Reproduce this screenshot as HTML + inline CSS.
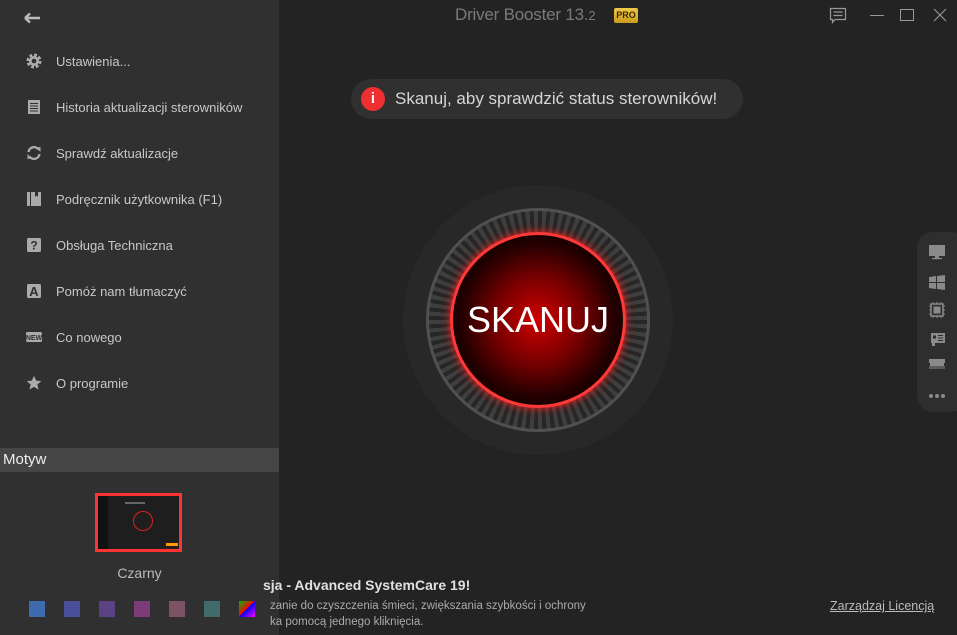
<!DOCTYPE html>
<html><head><meta charset="utf-8"><style>
*{margin:0;padding:0;box-sizing:border-box}
body{width:957px;height:635px;overflow:hidden;background:#232323;font-family:"Segoe UI","Liberation Sans",sans-serif;position:relative;color:#ccc}
.side{position:absolute;left:0;top:0;width:279px;height:635px;background:#303030;z-index:5}
.item{position:absolute;left:26px;height:20px;display:flex;align-items:center;font-size:13px;color:#c8c8c8}
.item svg{width:16px;height:16px;margin-right:14px;flex:none}
.motyw{position:absolute;left:0;top:448px;width:279px;height:24px;background:#454545;color:#eee;font-size:15px;line-height:24px;padding-left:3px}
.sw{position:absolute;top:601px;width:16px;height:16px}
.abs{position:absolute}
</style></head><body>
<div class="side">
 <svg class="abs" style="left:24px;top:11px" width="18" height="14" viewBox="0 0 18 14"><path d="M1 7H16M1 7L6 2.5M1 7L6 11.5" stroke="#bbb" stroke-width="2.4" fill="none"/></svg>
 <div class="item" style="top:51px"><svg viewBox="0 0 16 16"><circle cx="8" cy="8" r="5.5" fill="none" stroke="#aaa" stroke-width="4" stroke-dasharray="2.6 1.7"/><circle cx="8" cy="8" r="5" fill="#aaa"/><circle cx="8" cy="8" r="2.3" fill="#303030"/></svg>Ustawienia...</div>
 <div class="item" style="top:97px"><svg viewBox="0 0 16 16"><rect x="2" y="1" width="12" height="14" fill="#aaa"/><path d="M4 4.5H12M4 7H12M4 9.5H12M4 12H12" stroke="#303030" stroke-width="1"/></svg>Historia aktualizacji sterowników</div>
 <div class="item" style="top:143px"><svg viewBox="0 0 16 16"><path d="M2.5 7A5.5 5.5 0 0 1 12.5 4.5M13.5 9A5.5 5.5 0 0 1 3.5 11.5" stroke="#aaa" stroke-width="2.4" fill="none"/><path d="M10 2.5L14.5 2V7Z M6 13.5L1.5 14V9Z" fill="#aaa"/></svg>Sprawdź aktualizacje</div>
 <div class="item" style="top:189px"><svg viewBox="0 0 16 16"><rect x="1" y="1" width="3" height="14" fill="#aaa"/><path d="M5 1H9V6L10.5 4.5L12 6V1H15V15H5Z" fill="#aaa"/></svg>Podręcznik użytkownika (F1)</div>
 <div class="item" style="top:235px"><svg viewBox="0 0 16 16"><rect x="1" y="1" width="14" height="14" rx="1.5" fill="#aaa"/><text x="8" y="12.5" font-size="12" font-weight="bold" text-anchor="middle" fill="#303030" font-family="Liberation Sans">?</text></svg>Obsługa Techniczna</div>
 <div class="item" style="top:281px"><svg viewBox="0 0 16 16"><rect x="1" y="1" width="14" height="14" rx="1.5" fill="#aaa"/><text x="8" y="13" font-size="13" font-weight="bold" text-anchor="middle" fill="#303030" font-family="Liberation Sans">A</text></svg>Pomóż nam tłumaczyć</div>
 <div class="item" style="top:327px"><svg viewBox="0 0 16 16"><rect x="0" y="3" width="16" height="10" rx="1.5" fill="#aaa"/><text x="8" y="11.2" font-size="7" font-weight="bold" text-anchor="middle" fill="#303030" font-family="Liberation Sans">NEW</text></svg>Co nowego</div>
 <div class="item" style="top:373px"><svg viewBox="0 0 16 16"><path d="M8 0.8L10.2 5.6L15.3 6.1L11.4 9.5L12.6 14.6L8 11.9L3.4 14.6L4.6 9.5L0.7 6.1L5.8 5.6Z" fill="#aaa"/></svg>O programie</div>
 <div class="motyw">Motyw</div>
 <div class="abs" style="left:95px;top:493px;width:87px;height:59px;border:3px solid #ff3333;background:#1e1e1e">
  <div class="abs" style="left:0;top:0;width:10px;height:53px;background:#111"></div>
  <div class="abs" style="left:35px;top:15px;width:20px;height:20px;border:1.5px solid #d22;border-radius:50%"></div>
  <div class="abs" style="left:27px;top:6px;width:20px;height:2px;background:#666"></div>
  <div class="abs" style="left:68px;top:47px;width:12px;height:3px;background:#f90"></div>
 </div>
 <div class="abs" style="left:0;top:565px;width:279px;text-align:center;font-size:14px;color:#bbb">Czarny</div>
 <div class="sw" style="left:29px;background:#3f6aaf"></div>
 <div class="sw" style="left:64px;background:#4b4f9a"></div>
 <div class="sw" style="left:99px;background:#5b4283"></div>
 <div class="sw" style="left:134px;background:#7b3c78"></div>
 <div class="sw" style="left:169px;background:#7c5265"></div>
 <div class="sw" style="left:204px;background:#416a6b"></div>
 <div class="sw" style="left:239px;background:linear-gradient(135deg,#0b0 0%,#f00 50%,#00f 50%,#f0f 100%)"></div>
</div>

<div class="abs" style="left:455px;top:5px;font-size:17px;color:#7a7a7a;letter-spacing:-0.2px">Driver Booster 13.<span style="font-size:13px">2</span></div>
<div class="abs" style="left:614px;top:8px;width:24px;height:15px;background:linear-gradient(#f0c74a,#c99a1c);border-radius:2px;font-size:9px;color:#3a2a00;text-align:center;line-height:15px;font-weight:bold">PRO</div>
<svg class="abs" style="left:829px;top:7px" width="18" height="18" viewBox="0 0 18 18"><path d="M1.5 1.5H16.5V12.5H6L3.5 15.5V12.5H1.5Z" fill="none" stroke="#999" stroke-width="1.2"/><path d="M4.5 5H13.5M4.5 8.5H13.5" stroke="#999" stroke-width="1.2"/></svg>
<div class="abs" style="left:870px;top:15px;width:14px;height:1.3px;background:#999"></div>
<div class="abs" style="left:900px;top:9px;width:14px;height:12px;border:1.3px solid #999"></div>
<svg class="abs" style="left:933px;top:8px" width="14" height="14"><path d="M1 1L13 13M13 1L1 13" stroke="#999" stroke-width="1.1"/></svg>

<div class="abs" style="left:351px;top:79px;width:392px;height:40px;border-radius:20px;background:#303030"></div>
<div class="abs" style="left:361px;top:87px;width:24px;height:24px;border-radius:50%;background:#f03030;color:#fff;font-size:15px;font-weight:bold;text-align:center;line-height:24px">i</div>
<div class="abs" style="left:395px;top:89px;font-size:17px;color:#d6d6d6">Skanuj, aby sprawdzić status sterowników!</div>

<div class="abs" style="left:403px;top:185px;width:270px;height:270px;border-radius:50%;background:#282828"></div>
<div class="abs" style="left:426px;top:208px;width:224px;height:224px;border-radius:50%;background:#505050"></div>
<div class="abs" style="left:429px;top:211px;width:218px;height:218px;border-radius:50%;background:repeating-conic-gradient(#262626 0 2.2deg,#3e3e3e 2.2deg 4.5deg)"></div>
<div class="abs" style="left:429px;top:211px;width:218px;height:218px;border-radius:50%;background:radial-gradient(circle,rgba(255,40,40,0.5) 38%,rgba(120,10,10,0.25) 50%,transparent 66%)"></div>
<div class="abs" style="left:450px;top:232px;width:176px;height:176px;border-radius:50%;border:3px solid #ff3838;box-shadow:0 0 8px #ff2020;background:radial-gradient(circle,#d00000 0%,#7a0000 35%,#200000 65%,#150000 80%,#600000 100%)"></div>
<div class="abs" style="left:450px;top:299px;width:176px;text-align:center;font-size:36px;color:#fff;font-family:'Liberation Sans',sans-serif">SKANUJ</div>

<div class="abs" style="left:917px;top:232px;width:50px;height:180px;border-radius:16px;background:#2e2e2e"></div>
<svg class="abs" style="left:928px;top:244px" width="18" height="158" viewBox="0 0 18 158" fill="#8a8a8a">
 <rect x="1" y="1" width="16" height="11"/><rect x="7" y="12" width="4" height="2"/><rect x="4" y="14" width="10" height="1.2"/>
 <path d="M1 33L8 32V38H1Z M9 32L17 31V38H9Z M1 39H8V45L1 44Z M9 39H17V46L9 45Z"/>
 <rect x="3" y="60" width="12" height="12" fill="none" stroke="#8a8a8a" stroke-width="1.5"/><rect x="5.5" y="62.5" width="7" height="7"/>
 <path d="M5 58v2M9 58v2M13 58v2M5 72v2M9 72v2M13 72v2M1 62h2M1 66h2M1 70h2M15 62h2M15 66h2M15 70h2" stroke="#8a8a8a" stroke-width="1"/>
 <path d="M1 86H3V89H17V99H7V102H4V99H3V86Z"/><rect x="5" y="91.5" width="3" height="3" fill="#2e2e2e"/><path d="M10 91.5H15M10 94H15M10 96.5H15" stroke="#2e2e2e" stroke-width="1"/>
 <path d="M1 115H17V119H16V122H2V119H1Z"/><path d="M2 122v3M4 122v3M6 122v3M8 122v3M10 122v3M12 122v3M14 122v3M16 122v3" stroke="#8a8a8a" stroke-width="1"/>
 <circle cx="3" cy="152" r="2"/><circle cx="9" cy="152" r="2"/><circle cx="15" cy="152" r="2"/>
</svg>

<div class="abs" style="left:263px;top:577px;font-size:14px;font-weight:bold;color:#e0e0e0;white-space:nowrap;z-index:6">sja - Advanced SystemCare 19!</div>
<div class="abs" style="left:270px;top:598px;font-size:11.5px;color:#aaa;white-space:nowrap;line-height:16px;z-index:6">zanie do czyszczenia śmieci, zwiększania szybkości i ochrony<br>ka pomocą jednego kliknięcia.</div>
<div class="abs" style="left:830px;top:599px;font-size:12.5px;color:#bbb;text-decoration:underline">Zarządzaj Licencją</div>
</body></html>
